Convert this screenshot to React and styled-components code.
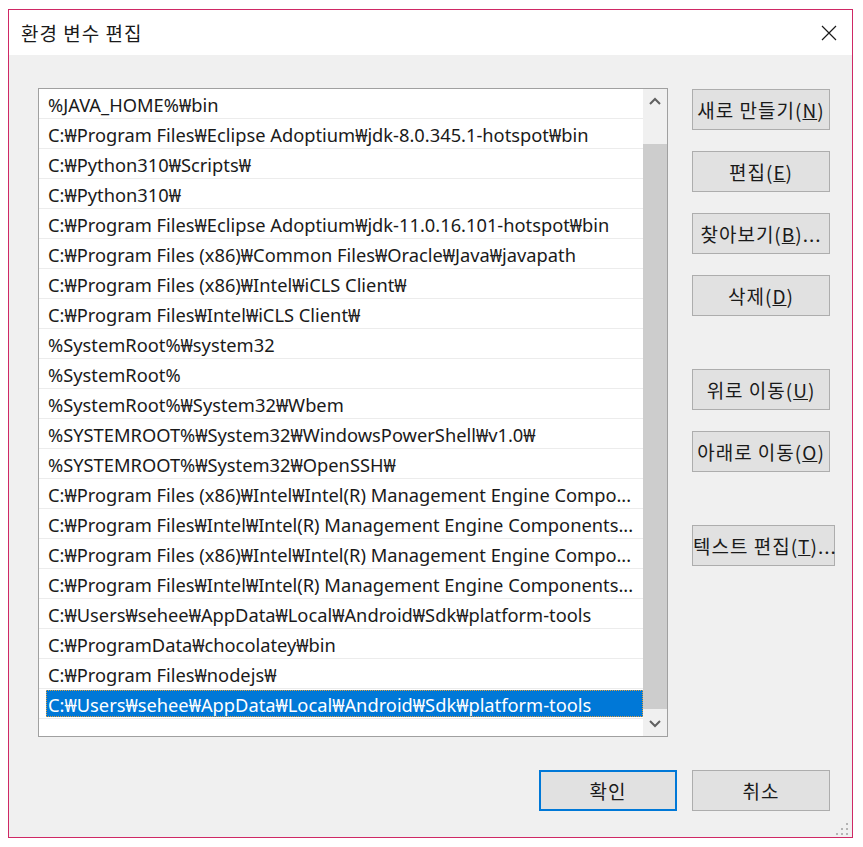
import React from "react";
import styled, { createGlobalStyle } from "styled-components";

const GlobalStyle = createGlobalStyle`
  body {
    margin: 0;
    background: #ffffff;
    font-family: "Noto Sans", "Noto Sans CJK KR", sans-serif;
  }
`;

const paths = [
  "%JAVA_HOME%₩bin",
  "C:₩Program Files₩Eclipse Adoptium₩jdk-8.0.345.1-hotspot₩bin",
  "C:₩Python310₩Scripts₩",
  "C:₩Python310₩",
  "C:₩Program Files₩Eclipse Adoptium₩jdk-11.0.16.101-hotspot₩bin",
  "C:₩Program Files (x86)₩Common Files₩Oracle₩Java₩javapath",
  "C:₩Program Files (x86)₩Intel₩iCLS Client₩",
  "C:₩Program Files₩Intel₩iCLS Client₩",
  "%SystemRoot%₩system32",
  "%SystemRoot%",
  "%SystemRoot%₩System32₩Wbem",
  "%SYSTEMROOT%₩System32₩WindowsPowerShell₩v1.0₩",
  "%SYSTEMROOT%₩System32₩OpenSSH₩",
  "C:₩Program Files (x86)₩Intel₩Intel(R) Management Engine Compo...",
  "C:₩Program Files₩Intel₩Intel(R) Management Engine Components...",
  "C:₩Program Files (x86)₩Intel₩Intel(R) Management Engine Compo...",
  "C:₩Program Files₩Intel₩Intel(R) Management Engine Components...",
  "C:₩Users₩sehee₩AppData₩Local₩Android₩Sdk₩platform-tools",
  "C:₩ProgramData₩chocolatey₩bin",
  "C:₩Program Files₩nodejs₩",
  "C:₩Users₩sehee₩AppData₩Local₩Android₩Sdk₩platform-tools",
];

const Chevron = ({ up }) => (
  <svg width="12" height="8" viewBox="0 0 12 8">
    <polyline
      points={up ? "1,7 6,2 11,7" : "1,1 6,6 11,1"}
      fill="none"
      stroke="#606060"
      strokeWidth="2"
    />
  </svg>
);

export default function App() {
  return (
    <>
      <GlobalStyle />
      <Window>
        <TitleBar>
          <Title>환경 변수 편집</Title>
          <Close>
            <svg width="16" height="16" viewBox="0 0 16 16">
              <path d="M1 1 L15 15 M15 1 L1 15" stroke="#1a1a1a" strokeWidth="1.2" />
            </svg>
          </Close>
        </TitleBar>
        <Body>
          <Main>
            <List>
              <Items>
                {paths.map((p, i) => (
                  <Row key={i}>
                    <Label selected={i === paths.length - 1}>{p}</Label>
                  </Row>
                ))}
              </Items>
              <Scrollbar>
                <Arrow>
                  <Chevron up />
                </Arrow>
                <Track>
                  <Thumb />
                </Track>
                <Arrow>
                  <Chevron />
                </Arrow>
              </Scrollbar>
            </List>
            <Side>
              <Button>새로 만들기(<u>N</u>)</Button>
              <Button>편집(<u>E</u>)</Button>
              <Button>찾아보기(<u>B</u>)...</Button>
              <Button>삭제(<u>D</u>)</Button>
              <Button spaced>위로 이동(<u>U</u>)</Button>
              <Button>아래로 이동(<u>O</u>)</Button>
              <Button spaced wide>텍스트 편집(<u>T</u>)...</Button>
            </Side>
          </Main>
          <Footer>
            <Button primary>확인</Button>
            <Button>취소</Button>
          </Footer>
          <Grip>
            <svg width="14" height="14" viewBox="0 0 14 14" fill="#b4b4b4">
              <rect x="11" y="1" width="2" height="2" />
              <rect x="11" y="6" width="2" height="2" />
              <rect x="6" y="6" width="2" height="2" />
              <rect x="11" y="11" width="2" height="2" />
              <rect x="6" y="11" width="2" height="2" />
              <rect x="1" y="11" width="2" height="2" />
            </svg>
          </Grip>
        </Body>
      </Window>
    </>
  );
}

const Window = styled.div`
  margin: 9px 0 0 8px;
  width: 845px;
  height: 829px;
  box-sizing: border-box;
  border: 1px solid #cf2865;
  display: flex;
  flex-direction: column;
`;

const TitleBar = styled.div`
  height: 46px;
  background: #ffffff;
  display: flex;
  align-items: center;
  justify-content: space-between;
  padding: 0 15px 0 12px;
`;

const Title = styled.div`
  font-family: "Noto Sans CJK KR", sans-serif;
  font-size: 19px;
  letter-spacing: 1px;
  color: #1a1a1a;
`;

const Close = styled.div`
  display: flex;
  align-items: center;
`;

const Body = styled.div`
  position: relative;
  flex: 1;
  background: #f0f0f0;
  padding: 33px 17px 26px 29px;
  display: flex;
  flex-direction: column;
  gap: 33px;
`;

const Main = styled.div`
  display: flex;
  gap: 24px;
  height: 649px;
`;

const List = styled.div`
  width: 630px;
  flex-shrink: 0;
  box-sizing: border-box;
  border: 1px solid #a0a0a0;
  background: #ffffff;
  display: flex;
`;

const Items = styled.div`
  flex: 1;
  min-width: 0;
  display: flex;
  flex-direction: column;
`;

const Row = styled.div`
  height: 30px;
  box-sizing: border-box;
  border-bottom: 1px solid #ececec;
  padding: 1px 0 1px 7px;
  display: flex;
`;

const Label = styled.div`
  flex: 1;
  min-width: 0;
  padding: 2px 0 0 2px;
  display: flex;
  align-items: center;
  font-size: 18.3px;
  white-space: nowrap;
  overflow: hidden;
  color: ${(p) => (p.selected ? "#ffffff" : "#1a1a1a")};
  background: ${(p) => (p.selected ? "#0078d7" : "transparent")};
  outline: ${(p) => (p.selected ? "1px dotted #e0a040" : "none")};
  outline-offset: -1px;
`;

const Scrollbar = styled.div`
  width: 24px;
  background: #f0f0f0;
  display: flex;
  flex-direction: column;
`;

const Arrow = styled.div`
  height: 24px;
  display: flex;
  align-items: center;
  justify-content: center;
`;

const Track = styled.div`
  flex: 1;
  padding: 31px 0 3px 0;
  display: flex;
`;

const Thumb = styled.div`
  flex: 1;
  background: #cdcdcd;
`;

const Side = styled.div`
  display: flex;
  flex-direction: column;
  align-items: flex-start;
  gap: 21px;
  padding-top: 1px;
`;

const Button = styled.button`
  width: ${(p) => (p.wide ? "143px" : "138px")};
  height: 41px;
  flex-shrink: 0;
  margin-top: ${(p) => (p.spaced ? "32px" : "0")};
  box-sizing: border-box;
  background: #e1e1e1;
  border: 1px solid ${(p) => (p.primary ? "#0078d7" : "#adadad")};
  box-shadow: ${(p) => (p.primary ? "inset 0 0 0 1px #0078d7" : "none")};
  font-family: "Noto Sans CJK KR", sans-serif;
  font-size: 19px;
  letter-spacing: 1px;
  color: #1a1a1a;
  padding: 0;
  white-space: nowrap;
`;

const Footer = styled.div`
  display: flex;
  justify-content: flex-end;
  gap: 15px;
  padding-right: 5px;
`;

const Grip = styled.div`
  position: absolute;
  right: 3px;
  bottom: 1px;
  line-height: 0;
`;
